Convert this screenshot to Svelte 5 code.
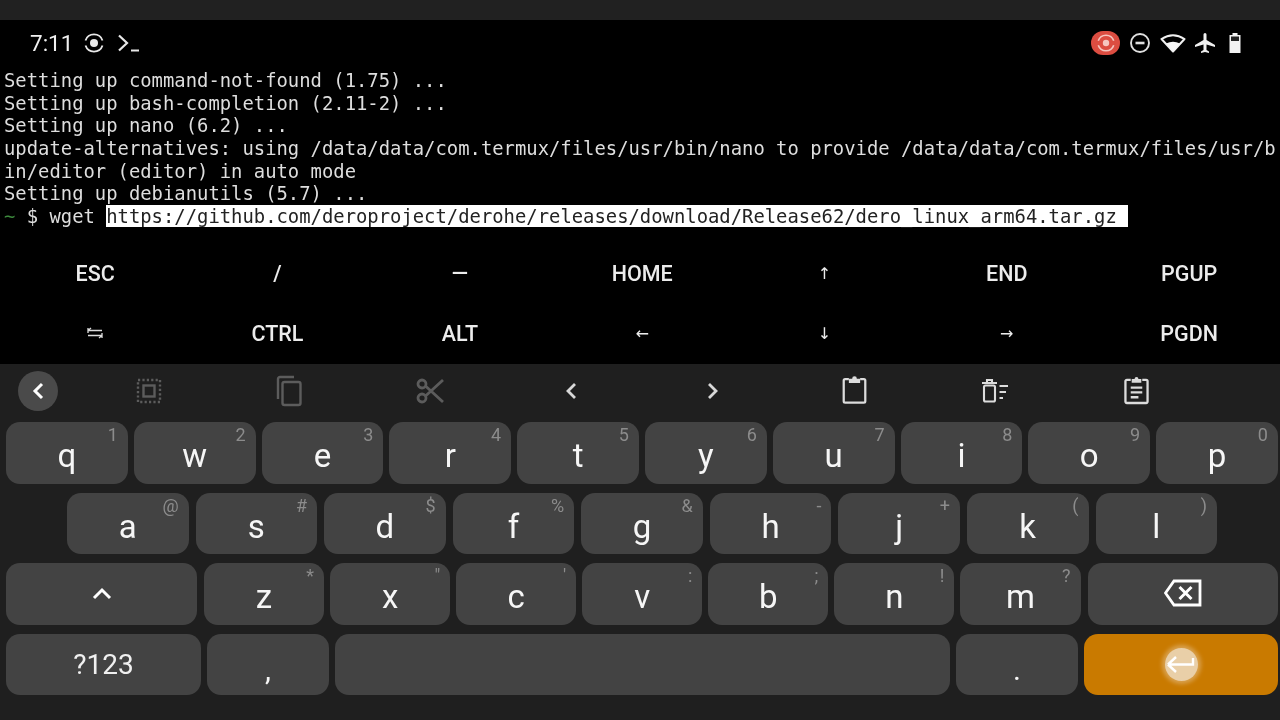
<script>
  const lines = [
    'Setting up command-not-found (1.75) ...',
    'Setting up bash-completion (2.11-2) ...',
    'Setting up nano (6.2) ...',
    'update-alternatives: using /data/data/com.termux/files/usr/bin/nano to provide /data/data/com.termux/files/usr/b',
    'in/editor (editor) in auto mode',
    'Setting up debianutils (5.7) ...'
  ];
  const url = 'https://github.com/deroproject/derohe/releases/download/Release62/dero_linux_arm64.tar.gz ';
  const extra = ['ESC', '/', '—', 'HOME', '↑', 'END', 'PGUP', 'TAB', 'CTRL', 'ALT', '←', '↓', '→', 'PGDN'];
  const row1 = [['q','1'],['w','2'],['e','3'],['r','4'],['t','5'],['y','6'],['u','7'],['i','8'],['o','9'],['p','0']];
  const row2 = [['a','@'],['s','#'],['d','$'],['f','%'],['g','&'],['h','-'],['j','+'],['k','('],['l',')']];
  const row3 = [['z','*'],['x','"'],['c',"'"],['v',':'],['b',';'],['n','!'],['m','?']];
</script>

<div class="screen">
  <div class="topbar"></div>

  <main class="term">
    <header class="status">
      <span class="time">7:11</span>
      <svg class="s1" width="22" height="22" viewBox="0 0 22 22" fill="none" stroke="#e8e8e8" stroke-width="1.800">
        <circle cx="11" cy="11" r="4" fill="#e8e8e8" stroke="none"/>
        <path d="M2.500 8.500A9 9 0 0 1 19.500 8.500M19.500 13.500A9 9 0 0 1 2.500 13.500"/>
      </svg>
      <svg class="s2" width="24" height="22" viewBox="0 0 24 22" fill="none" stroke="#e8e8e8" stroke-width="2.200">
        <path d="M2 3.500 10 11 2 18.500"/><path d="M14 18.500h8" stroke-width="2"/>
      </svg>
      <div class="spacer"></div>
      <span class="pill">
        <svg width="20" height="20" viewBox="0 0 22 22" fill="none" stroke="#f6c6bf" stroke-width="1.800">
          <circle cx="11" cy="11" r="3.500" fill="#f6c6bf" stroke="none"/>
          <path d="M2.500 8.500A9 9 0 0 1 19.500 8.500M19.500 13.500A9 9 0 0 1 2.500 13.500"/>
        </svg>
      </span>
      <svg class="dnd" width="22" height="22" viewBox="0 0 22 22" fill="none" stroke="#e0e0e0" stroke-width="1.900">
        <circle cx="11" cy="11" r="9"/><path d="M6.500 11h9" stroke-width="2.600"/>
      </svg>
      <svg class="wifi" width="26" height="20" viewBox="0 0 26 20">
        <path d="M13 18.500 1.500 6Q13-1.500 24.500 6Z" fill="none" stroke="#f0f0f0" stroke-width="2" stroke-linejoin="round"/>
        <path d="M13 18.500 6 10.500Q13 7 20 10.500Z" fill="#f6f6f6"/>
      </svg>
      <svg class="plane" width="22" height="24" viewBox="0 0 22 24">
        <path d="M21 16v-2l-8.500-5V3.500a1.500 1.500 0 0 0-3 0V9L1 14v2l8.500-2.500V19l-2.500 1.500V22l4-1 4 1v-1.500L12.500 19v-5.500z" fill="#f0f0f0"/>
      </svg>
      <svg class="batt" width="14" height="22" viewBox="0 0 14 22">
        <path d="M4.500 1h5v2h3v18h-11V3h3z" fill="#f2f2f2"/>
        <rect x="3" y="4.500" width="8" height="4.500" fill="#222"/>
      </svg>
    </header>

    <div class="output">
      {#each lines as l}<div class="ln">{l}</div>{/each}
      <div class="ln"><span class="tilde">~</span> $ wget <span class="sel">{url}</span></div>
    </div>

    <div class="extra">
      {#each extra as k}
        <div class="xk" class:arrow={'↑↓←→'.includes(k)}>
          {#if k === 'TAB'}
            <svg width="16" height="12" viewBox="0 0 16 12" stroke="#ddd" stroke-width="1.300" fill="none">
              <path d="M1 3.500h14M1 3.500l3-2.500M1 1v5M15 8.500H1M15 8.500l-3 2.500M15 6v5"/>
            </svg>
          {:else}{k}{/if}
        </div>
      {/each}
    </div>
  </main>

  <section class="kb">
    <div class="tools">
      <button class="back" aria-label="back">
        <svg width="16" height="20" viewBox="0 0 16 20" fill="none" stroke="#fff" stroke-width="3"><path d="M12 3 5 10l7 7"/></svg>
      </button>
      <div class="tool">
        <svg width="28" height="28" viewBox="0 0 28 28" fill="none" stroke="#5c5c5c">
          <rect x="3" y="3" width="22" height="22" stroke-width="2.400" stroke-dasharray="2.200 2.200"/>
          <rect x="8.500" y="8.500" width="11" height="11" stroke-width="2.400"/>
        </svg>
      </div>
      <div class="tool">
        <svg width="28" height="32" viewBox="0 0 28 32" fill="none" stroke="#5c5c5c" stroke-width="2.400">
          <path d="M2 24V4a2 2 0 0 1 2-2h14"/><rect x="6.500" y="7" width="18" height="23" rx="2"/>
        </svg>
      </div>
      <div class="tool">
        <svg width="30" height="30" viewBox="0 0 30 30" fill="none" stroke="#5c5c5c" stroke-width="2.800">
          <circle cx="6" cy="8" r="4"/><circle cx="6" cy="22" r="4"/><path d="M9.500 10 27 26M9.500 20 27 4"/>
        </svg>
      </div>
      <div class="tool">
        <svg width="14" height="20" viewBox="0 0 14 20" fill="none" stroke="#d8d8d8" stroke-width="2.800"><path d="M10 3 3 10l7 7"/></svg>
      </div>
      <div class="tool">
        <svg width="14" height="20" viewBox="0 0 14 20" fill="none" stroke="#d8d8d8" stroke-width="2.800"><path d="M3 3l7 7-7 7"/></svg>
      </div>
      <div class="tool">
        <svg class="up4" width="25" height="30" viewBox="0 0 26 32" fill="none" stroke="#dcdcdc" stroke-width="2.400">
          <path d="M7 5.500H3a1.500 1.500 0 0 0-1.500 1.500v22A1.500 1.500 0 0 0 3 30.500h20a1.500 1.500 0 0 0 1.500-1.500V7A1.500 1.500 0 0 0 23 5.500h-4"/>
          <path d="M7 9.500h12V5h-3.500a2.500 2.500 0 0 0-5 0H7z" fill="#dcdcdc" stroke="none"/>
        </svg>
      </div>
      <div class="tool">
        <svg width="28" height="26" viewBox="0 0 28 26" fill="none" stroke="#dcdcdc" stroke-width="2.100">
          <path d="M1 5h15M6 5V2h5v3"/><rect x="3" y="7.500" width="11" height="16" rx="1.500"/>
          <path d="M18.500 8H27M18.500 14H25M18.500 20H22"/>
        </svg>
      </div>
      <div class="tool">
        <svg class="up2" width="25" height="29" viewBox="0 0 26 30" fill="none" stroke="#dcdcdc" stroke-width="2.400">
          <path d="M7 4H3a1.500 1.500 0 0 0-1.500 1.500v21A1.500 1.500 0 0 0 3 28h20a1.500 1.500 0 0 0 1.500-1.500v-21A1.500 1.500 0 0 0 23 4h-4"/>
          <path d="M8 7V3h3a2 2 0 0 1 4 0h3v4z" fill="#dcdcdc" stroke="none"/>
          <path d="M7 12h12M7 17h12M7 22h8"/>
        </svg>
      </div>
    </div>

    <div class="rows">
      <div class="row r1">
        {#each row1 as [k, h]}<div class="key"><span class="lab">{k}</span><span class="hint">{h}</span></div>{/each}
      </div>
      <div class="row r2">
        {#each row2 as [k, h]}<div class="key"><span class="lab">{k}</span><span class="hint">{h}</span></div>{/each}
      </div>
      <div class="row r3">
        <div class="key shift">
          <svg width="20" height="14" viewBox="0 0 20 14" fill="none" stroke="#fff" stroke-width="3"><path d="M2 12l8-8 8 8"/></svg>
        </div>
        <div class="letters">
          {#each row3 as [k, h]}<div class="key"><span class="lab">{k}</span><span class="hint">{h}</span></div>{/each}
        </div>
        <div class="key bksp">
          <svg width="38" height="28" viewBox="0 0 38 28" fill="none" stroke="#fff" stroke-width="2.800">
            <path d="M10 2h26v24H10L1.500 14z"/><path d="M15.500 8l12 12M27.500 8l-12 12" stroke-width="3"/>
          </svg>
        </div>
      </div>
      <div class="row r4">
        <div class="key sym">?123</div>
        <div class="key punct"><span class="lab low">,</span></div>
        <div class="key space"></div>
        <div class="key punct"><span class="lab low">.</span></div>
        <div class="key enter">
          <span class="halo">
            <svg width="30" height="22" viewBox="0 0 30 22" fill="none" stroke="#fff" stroke-width="2.400">
              <path d="M2 11.500h25V5M2 11.500l8-7.500M2 11.500l8 7.500"/>
            </svg>
          </span>
        </div>
      </div>
    </div>
  </section>
</div>

<style>
  :global(body) { margin: 0; background: #000; }
  .screen {
    width: 1280px; height: 720px; overflow: hidden;
    display: flex; flex-direction: column;
    font-family: Roboto, sans-serif; color: #fff;
    filter: blur(0.5px);
  }
  .topbar { height: 20px; background: #212121; flex: none; }
  .term { height: 344px; background: #000; flex: none; display: flex; flex-direction: column; }

  .status { height: 45px; display: flex; align-items: center; padding: 0 38px 4px 30px; flex: none; }
  .time { font-size: 22.500px; color: #f0f0f0; width: 43px; }
  .s1 { margin-left: 10px; }
  .s2 { margin-left: 12px; }
  .spacer { flex: 1; }
  .pill {
    width: 29px; height: 24px; border-radius: 12px; background: #dc4d41;
    display: flex; align-items: center; justify-content: center;
  }
  .dnd { margin-left: 9px; }
  .wifi { margin-left: 9px; }
  .plane { margin-left: 8px; }
  .batt { margin-left: 12px; }

  .output {
    padding-left: 4px; flex: none;
    font-family: "DejaVu Sans Mono", monospace;
    font-size: 18.870px; line-height: 22.700px; color: #dedede;
    height: 159px;
  }
  .ln { height: 22.700px; white-space: pre; }
  .tilde { color: #3d8a3d; }
  .sel { background: #fff; color: #222; }

  .extra {
    flex: 1; display: grid; margin-top: 15px;
    grid-template-columns: repeat(7, 182.330px); grid-auto-rows: 60px;
    padding-left: 4px;
  }
  .xk {
    display: flex; align-items: center; justify-content: center;
    font-size: 21.500px; font-weight: 500; color: #ececec;
  }
  .xk.arrow { font-size: 16px; font-weight: 400; font-family: "DejaVu Sans", sans-serif; }

  .kb { flex: 1; background: #1f1f1f; display: flex; flex-direction: column; }
  .tools { height: 54px; display: flex; align-items: center; padding: 0 0 4px 18px; flex: none; }
  .back {
    width: 40px; height: 40px; border-radius: 50%; background: #4a4a4a; border: 0; padding: 0;
    display: flex; align-items: center; justify-content: center; flex: none; margin-right: 20.500px;
  }
  .tool { width: 141px; display: flex; align-items: center; justify-content: center; flex: none; }
  .up4 { margin-bottom: 4px; }
  .up2 { margin-bottom: 2px; }

  .rows { display: flex; flex-direction: column; gap: 9px; }
  .row { display: flex; height: 61.500px; }
  .r1 { gap: 6px; padding: 0 2px 0 6px; }
  .r2 { gap: 7px; padding: 0 63px 0 67px; }
  .r3 { gap: 7px; padding: 0 2px 0 6px; }
  .r4 { gap: 6px; padding: 0 2px 0 6px; }
  .letters { display: flex; gap: 6px; flex: none; width: 876.500px; }
  .letters .key { flex: 1; }

  .key {
    flex: 1; position: relative; background: #434343; border-radius: 14px;
    display: flex; align-items: center; justify-content: center; min-width: 0;
  }
  .lab { font-size: 33px; color: #f6f6f6; line-height: 1; margin-top: 6px; }
  .lab.low { margin-top: 12px; font-size: 30px; }
  .hint { position: absolute; top: 2px; right: 10px; font-size: 18px; line-height: 22px; color: #8c8c8c; }
  .shift { flex: none; width: 191px; }
  .shift svg { margin-top: -2px; }
  .bksp { flex: 1; }
  .bksp svg { margin-top: -2px; }
  .sym { flex: none; width: 195px; font-size: 28px; color: #f0f0f0; }
  .punct { flex: none; width: 122px; }
  .space { flex: none; width: 615px; }
  .enter { flex: 1; background: #c97a00; }
  .halo {
    width: 33px; height: 33px; border-radius: 50%; background: #e9cfa8;
    box-shadow: 0 0 4px 3px #d9a250;
    display: flex; align-items: center; justify-content: center;
  }
  .halo svg { flex: none; }
</style>
